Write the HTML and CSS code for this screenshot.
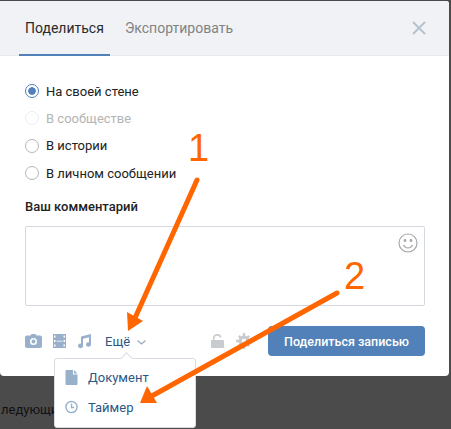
FILE: index.html
```html
<!DOCTYPE html>
<html lang="ru">
<head>
  <meta charset="UTF-8">
  <title>Поделиться</title>
  <link rel="stylesheet" href="styles.css">
</head>
<body>
  <div class="modal">
    <div class="tabs">
      <a class="tab active">Поделиться</a>
      <a class="tab">Экспортировать</a>
      <svg class="close" width="14" height="14" viewBox="0 0 14 14"><path d="M1 1l12 12M13 1L1 13" stroke="#b4c0cd" stroke-width="1.8" fill="none"/></svg>
    </div>

    <div class="content">
      <div class="radios">
        <div class="radio checked"><i></i>На своей стене</div>
        <div class="radio disabled"><i></i>В сообществе</div>
        <div class="radio"><i></i>В истории</div>
        <div class="radio"><i></i>В личном сообщении</div>
      </div>

      <div class="label">Ваш комментарий</div>
      <div class="comment">
        <svg class="smile" width="20" height="20" viewBox="0 0 20 20" fill="none" stroke="#a5a8ab" stroke-width="1.2"><circle cx="10" cy="10" r="9"/><path d="M5.500 12c1 2 2.700 3 4.500 3s3.500-1 4.500-3"/><circle cx="7" cy="7.500" r=".8" fill="#a5a8ab"/><circle cx="13" cy="7.500" r=".8" fill="#a5a8ab"/></svg>
      </div>

      <div class="toolbar">
        <svg class="ico-camera" width="17" height="14" viewBox="0 0 17 14"><path fill="#99b0cb" fill-rule="evenodd" d="M5.500 1.500L6.500 0h4l1 1.500H15a2 2 0 0 1 2 2V12a2 2 0 0 1-2 2H2a2 2 0 0 1-2-2V3.500a2 2 0 0 1 2-2zM8.500 11a3.500 3.500 0 1 0 0-7 3.500 3.500 0 0 0 0 7zm0-1.500a2 2 0 1 1 0-4 2 2 0 0 1 0 4z"/></svg>
        <svg class="ico-film" width="13" height="14" viewBox="0 0 13 14"><path fill="#99b0cb" fill-rule="evenodd" d="M0 0h13v14H0zM1 1.500v2h1.500v-2zM1 6v2h1.500V6zM1 10.500v2h1.500v-2zM10.500 1.500v2H12v-2zM10.500 6v2H12V6zM10.500 10.500v2H12v-2zM3.500 6.700v.7h6v-.7z"/></svg>
        <svg class="ico-note" width="14" height="14" viewBox="0 0 14 14"><path fill="#99b0cb" d="M4 2.500L14 0v10.500a2.500 2.200 0 1 1-2-2.100V3.300L6 4.700v7.100A2.500 2.200 0 1 1 4 9.700z"/></svg>
        <span class="more">Ещё</span>
        <svg class="chevron" width="9" height="5" viewBox="0 0 9 5"><path d="M.5.500l4 3.500 4-3.500" stroke="#99a9bb" stroke-width="1.200" fill="none"/></svg>
        <div class="toolbar-right">
          <svg class="ico-lock" width="13" height="14" viewBox="0 0 13 14"><path fill="#c8ccd1" fill-rule="evenodd" d="M0 6h2V4a4.300 4 0 0 1 8.500-.8L9 3.700A2.800 2.500 0 0 0 3.500 4v2H12a1 1 0 0 1 1 1v6a1 1 0 0 1-1 1H1a1 1 0 0 1-1-1z"/></svg>
          <svg class="ico-gear" width="16" height="16" viewBox="0 0 16 16"><g fill="#c8ccd1"><path fill-rule="evenodd" d="M8 2.500a5.500 5.500 0 1 0 0 11 5.500 5.500 0 0 0 0-11zm0 3.300a2.200 2.200 0 1 1 0 4.400 2.200 2.200 0 0 1 0-4.400z"/><path d="M6.800 0h2.400v3H6.800zM6.800 13h2.400v3H6.800zM0 6.800h3v2.400H0zM13 6.800h3v2.400h-3zM2 3.700L3.700 2l2 2L4 5.700zM10.300 12l1.700-1.700 2 2-1.700 1.700zM2 12.300l2-2L5.700 12l-2 2zM10.300 4l2-2L14 3.700l-2 2z"/></g></svg>
          <button class="submit">Поделиться записью</button>
        </div>
      </div>
    </div>
  </div>

  <div class="behind">ледующи</div>

  <div class="menu">
    <div class="menu-item">
      <svg width="12" height="15" viewBox="0 0 12 15"><path fill="#99b0cb" d="M1 0h6.500v4.500H12V14a1 1 0 0 1-1 1H1a1 1 0 0 1-1-1V1a1 1 0 0 1 1-1zM8.500 0L12 3.500H8.500z"/></svg>
      Документ
    </div>
    <div class="menu-item">
      <svg width="14" height="14" viewBox="0 0 14 14" fill="none" stroke="#99b0cb" stroke-width="1.500"><circle cx="7" cy="7" r="6"/><path d="M7 3.500V7.500h3"/></svg>
      Таймер
    </div>
  </div>

  <!-- стрелки и цифры поверх скриншота -->
  <span class="num num-one">1</span>
  <span class="num num-two">2</span>
  <svg class="arrows" width="451" height="429" viewBox="0 0 451 429">
    <g fill="#ff6600">
      <path d="M197 180L135 318" stroke="#ff6600" stroke-width="5" stroke-linecap="round"/>
      <path d="M128 331l-1-19 16 9z"/>
      <path d="M337 293L150 397" stroke="#ff6600" stroke-width="5" stroke-linecap="round"/>
      <path d="M140 403l7-17 10 17z"/>
    </g>
  </svg>
</body>
</html>
```

FILE: styles.css
```css
* {
  box-sizing: border-box;
}
body {
  margin: 0;
  width: 451px;
  height: 429px;
  overflow: hidden;
  position: relative;
  background: #4b4b4b;
  font-family: Roboto, "Open Sans", sans-serif;
  font-size: 13px;
  color: #222;
}

/* Окно */
.modal {
  width: 449px;
  height: 375px;
  margin-top: 1px;
  background: #fff;
  border-radius: 0 3px 4px 4px;
  overflow: hidden;
}

.tabs {
  display: flex;
  align-items: stretch;
  height: 55px;
  padding: 0 19px;
  background: #f0f2f5;
  border-bottom: 1px solid #e7e8ec;
  font-size: 14px;
}
.tab {
  display: flex;
  align-items: center;
  padding: 0 6px;
  margin-right: 9px;
  color: #828282;
}
.tab.active {
  color: #2a2a2a;
  height: 55px;
  border-bottom: 2px solid #5181b8;
}
.close {
  margin: 20px 4px 0 auto;
}

.content {
  padding: 26px 24px 0 25px;
}

/* Переключатели */
.radios {
  display: flex;
  flex-direction: column;
  gap: 9.400px;
}
.radio {
  display: flex;
  align-items: center;
  gap: 7px;
  height: 18px;
}
.radio i {
  width: 14px;
  height: 14px;
  border: 1px solid #b2b5b8;
  border-radius: 50%;
  background: #fff;
}
.radio.checked i {
  border-color: #5181b8;
  background: radial-gradient(circle, #5181b8 0 3.500px, #fff 4px);
}
.radio.disabled {
  color: #b4b4b4;
}
.radio.disabled i {
  border-color: #eeeeee;
}

.label {
  margin-top: 16px;
  font-weight: 500;
  line-height: 18px;
}

.comment {
  position: relative;
  height: 80px;
  margin-top: 10px;
  border: 1px solid #d3d9de;
  border-radius: 2px;
}
.smile {
  position: absolute;
  top: 6px;
  right: 6px;
}

/* Нижняя панель */
.toolbar {
  display: flex;
  align-items: center;
  height: 30px;
  margin-top: 20px;
}
.ico-film {
  margin-left: 11px;
}
.ico-note {
  margin-left: 11px;
}
.more {
  margin-left: 14px;
  color: #2a5885;
}
.chevron {
  margin-left: 7px;
  margin-top: 2px;
}
.toolbar-right {
  display: flex;
  align-items: center;
  margin-left: auto;
}
.ico-gear {
  margin-left: 12px;
}
.submit {
  width: 157px;
  height: 30px;
  margin-left: 16px;
  padding: 0;
  border: none;
  border-radius: 4px;
  background: #5181b8;
  color: #fff;
  font: 500 12.500px Roboto, "Open Sans", sans-serif;
}

/* Текст за окном */
.behind {
  position: absolute;
  left: 1px;
  top: 402px;
  color: #111;
  font-size: 13px;
}

/* Выпадающее меню */
.menu {
  position: absolute;
  left: 54px;
  top: 358px;
  width: 142px;
  height: 70px;
  padding: 3px 0;
  background: #fff;
  border: 1px solid #d7dce2;
  border-radius: 3px;
}
.menu::before {
  content: "";
  position: absolute;
  left: 67px;
  top: -5px;
  width: 8px;
  height: 8px;
  background: #fff;
  border: 1px solid #d7dce2;
  border-width: 1px 0 0 1px;
  transform: rotate(45deg);
}
.menu-item {
  display: flex;
  align-items: center;
  gap: 10px;
  height: 30px;
  padding-left: 10px;
  color: #2a5885;
}
.menu-item svg {
  width: 13px;
}

/* Пометки */
.arrows {
  position: absolute;
  left: 0;
  top: 0;
}
.num {
  position: absolute;
  color: #ff6600;
  font-family: "Liberation Sans", sans-serif;
  font-size: 38px;
  line-height: 38px;
}
.num-one {
  left: 188px;
  top: 129px;
}
.num-two {
  left: 344px;
  top: 257px;
}
```
